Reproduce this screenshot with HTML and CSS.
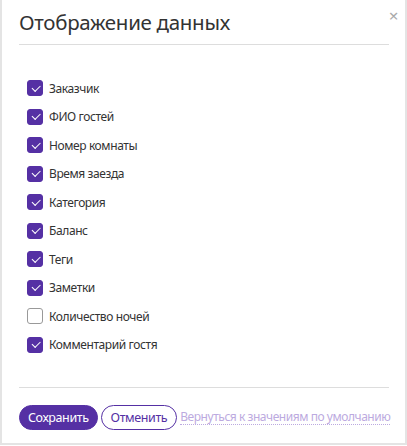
FILE: index.html
```html
<!DOCTYPE html>
<html lang="ru">
<head>
    <meta charset="UTF-8">
    <title>Отображение данных</title>
    <link rel="stylesheet" href="styles.css">
</head>
<body>
    <div class="modal">
        <header class="modal-header">
            <h1>Отображение данных</h1>
            <span class="close">&times;</span>
        </header>
        <ul class="fields">
            <li><span class="box on"></span>Заказчик</li>
            <li><span class="box on"></span>ФИО гостей</li>
            <li><span class="box on"></span>Номер комнаты</li>
            <li><span class="box on"></span>Время заезда</li>
            <li><span class="box on"></span>Категория</li>
            <li><span class="box on"></span>Баланс</li>
            <li><span class="box on"></span>Теги</li>
            <li><span class="box on"></span>Заметки</li>
            <li><span class="box"></span>Количество ночей</li>
            <li><span class="box on"></span>Комментарий гостя</li>
        </ul>
        <footer class="modal-footer">
            <button class="btn btn-primary">Сохранить</button>
            <button class="btn btn-outline">Отменить</button>
            <a class="reset" href="#">Вернуться к значениям по умолчанию</a>
        </footer>
    </div>
</body>
</html>
```

FILE: styles.css
```css
body {
    margin: 0;
    padding: 0;
    background-color: #fff;
    font-family: "Noto Sans", "Open Sans", Arial, sans-serif;
    letter-spacing: -0.4px;
    color: #333;
}
.modal {
    position: relative;
    box-sizing: border-box;
    width: 407px;
    height: 445px;
    padding: 0 16px 0 17px;
    border: 2px solid #e4e4e4;
    border-top: none;
    display: flex;
    flex-direction: column;
}
.modal-header {
    height: 44px;
    border-bottom: 1px solid #ddd;
    display: flex;
    align-items: center;
}
.modal-header h1 {
    margin: 0;
    font-size: 20.5px;
    font-weight: normal;
    letter-spacing: -0.3px;
    color: #333;
}
.close {
    position: absolute;
    top: 4px;
    right: 7px;
    font-size: 17px;
    color: #aaa;
}
.fields {
    list-style: none;
    margin: 0;
    padding: 29px 0 0 8px;
    border-bottom: 1px solid #ddd;
    padding-bottom: 28px;
}
.fields li {
    height: 28.5px;
    display: flex;
    align-items: center;
    font-size: 12px;
}
.box {
    box-sizing: border-box;
    width: 16px;
    height: 16px;
    margin-right: 6px;
    border: 1px solid #999;
    border-radius: 3px;
    position: relative;
}
.box.on {
    background-color: #5530a4;
    border-color: #5530a4;
}
.box.on::after {
    content: "";
    position: absolute;
    left: 4px;
    top: 3.5px;
    width: 7px;
    height: 3.5px;
    border-left: 1px solid #fff;
    border-bottom: 1px solid #fff;
    transform: rotate(-45deg);
}
.modal-footer {
    padding-top: 17px;
    display: flex;
    align-items: center;
}
.btn {
    height: 25px;
    border-radius: 13px;
    font-family: inherit;
    font-size: 12.5px;
    letter-spacing: -0.4px;
    padding: 0 9px;
    margin-right: 3px;
    cursor: pointer;
}
.btn-primary {
    padding: 0 8px;
    background-color: #5530a4;
    border: 1px solid #5530a4;
    color: #fff;
}
.btn-outline {
    background-color: #fff;
    border: 1px solid #5530a4;
    color: #5530a4;
}
.reset {
    font-size: 12px;
    letter-spacing: -0.45px;
    white-space: nowrap;
    color: #bcaae0;
    text-decoration: none;
    border-bottom: 1px dotted #bcaae0;
    line-height: 14px;
}
```
